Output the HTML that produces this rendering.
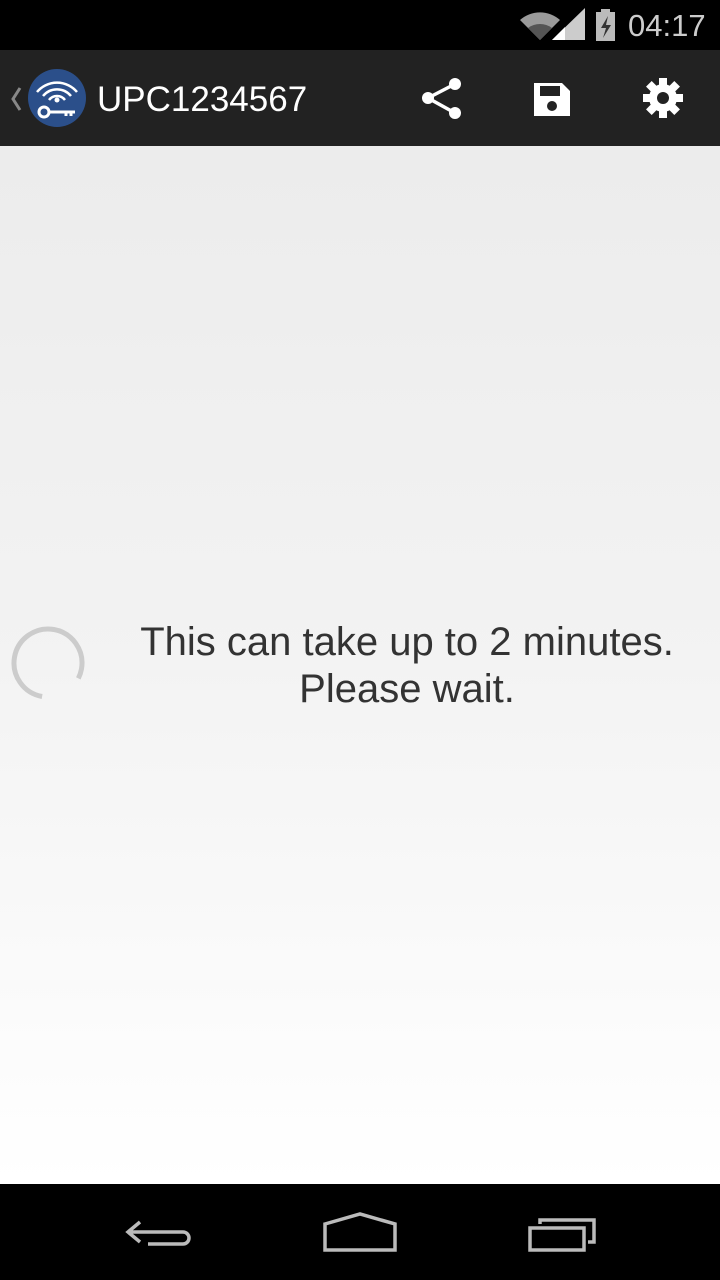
<!DOCTYPE html>
<html><head><style>
body{margin:0;width:720px;height:1280px;overflow:hidden;font-family:"Liberation Sans",sans-serif;position:relative}
.sb{position:absolute;top:0;left:0;width:720px;height:50px;background:#000}
.ab{position:absolute;top:50px;left:0;width:720px;height:96px;background:#222;box-shadow:0 2px 3px rgba(0,0,0,.3)}
.ct{position:absolute;top:146px;left:0;width:720px;height:1038px;background:linear-gradient(#ececec,#f3f3f3 50%,#fff)}
.nb{position:absolute;top:1184px;left:0;width:720px;height:96px;background:#000}
.txt{position:absolute;left:96px;width:622px;top:619px;text-align:center;font-size:40px;line-height:47px;color:#333}
</style></head><body>
<div class="sb">
<svg width="720" height="50" style="position:absolute;left:0;top:0">
<path d="M520 20 A30 30 0 0 1 560 20 L540 40Z" fill="#9a9a9a"/>
<path d="M528 28 A20 20 0 0 1 552 28 L540 40Z" fill="#555"/>
<path d="M552 40 L585 8 L585 40Z" fill="#ccc"/>
<path d="M552 40 L565 27 L565 40Z" fill="#fff"/>
<rect x="596" y="12" width="19" height="29" fill="#bbb"/><rect x="601" y="9" width="9" height="4" fill="#bbb"/>
<path d="M608 16 L601 28 L606 28 L603 38 L611 25 L606 25Z" fill="#333"/>
<text x="628" y="36" font-family="Liberation Sans" font-size="31" fill="#ccc">04:17</text>
</svg></div>
<div class="ab">
<svg width="720" height="96" style="position:absolute;left:0;top:0">
<path d="M20 38 L13 49 L20 60" stroke="#888" stroke-width="3" fill="none"/>
<circle cx="57" cy="48" r="29" fill="#2b4f8a"/>
<path d="M37 42 A26 26 0 0 1 77 42 M43 46 A18 18 0 0 1 71 46 M49 50 A10 10 0 0 1 65 50" stroke="#fff" stroke-width="2.5" fill="none"/>
<circle cx="57" cy="50" r="2.5" fill="#fff"/>
<circle cx="44" cy="62" r="5" fill="none" stroke="#fff" stroke-width="3"/>
<path d="M49 62 L75 62 M66 62 L66 66 M71 62 L71 66" stroke="#fff" stroke-width="3"/>
<text x="97" y="61" font-family="Liberation Sans" font-size="35" fill="#fff">UPC1234567</text>
<g fill="#fff"><circle cx="455" cy="34" r="6"/><circle cx="428" cy="48" r="6"/><circle cx="455" cy="63" r="6"/></g>
<path d="M455 34 L428 48 L455 63" stroke="#fff" stroke-width="3.5" fill="none"/>
<path d="M534 33 h28 l8 8 v25 h-36z" fill="#fff"/>
<rect x="540" y="36" width="20" height="10" fill="#222"/>
<circle cx="552" cy="56" r="5" fill="#222"/>
<g transform="translate(663 48)">
<circle r="14" fill="#fff"/>
<g fill="#fff"><rect x="-4" y="-20" width="8" height="40"/><rect x="-4" y="-20" width="8" height="40" transform="rotate(45)"/><rect x="-4" y="-20" width="8" height="40" transform="rotate(90)"/><rect x="-4" y="-20" width="8" height="40" transform="rotate(135)"/></g>
<circle r="6" fill="#222"/></g>
</svg></div>
<div class="ct"></div>
<svg width="100" height="100" style="position:absolute;left:0;top:613px">
<circle cx="48" cy="50" r="34" fill="none" stroke="#ccc" stroke-width="5" stroke-dasharray="170 100" transform="rotate(100 48 50)"/>
</svg>
<div class="txt">This can take up to 2 minutes.<br>Please wait.</div>
<div class="nb">
<svg width="720" height="96" style="position:absolute;left:0;top:0">
<path d="M140 38 L128 48 L140 58 M128 48 H183 a6 6 0 0 1 0 12 H148" stroke="#bbb" stroke-width="3.5" fill="none"/>
<path d="M325 40 L360 30 L395 40 V66 H325Z" stroke="#bbb" stroke-width="3.5" fill="none"/>
<rect x="530" y="44" width="54" height="22" stroke="#bbb" stroke-width="3.5" fill="none"/>
<path d="M540 40 V36 H594 V58 H588" stroke="#bbb" stroke-width="3.5" fill="none"/>
</svg></div>
</body></html>
